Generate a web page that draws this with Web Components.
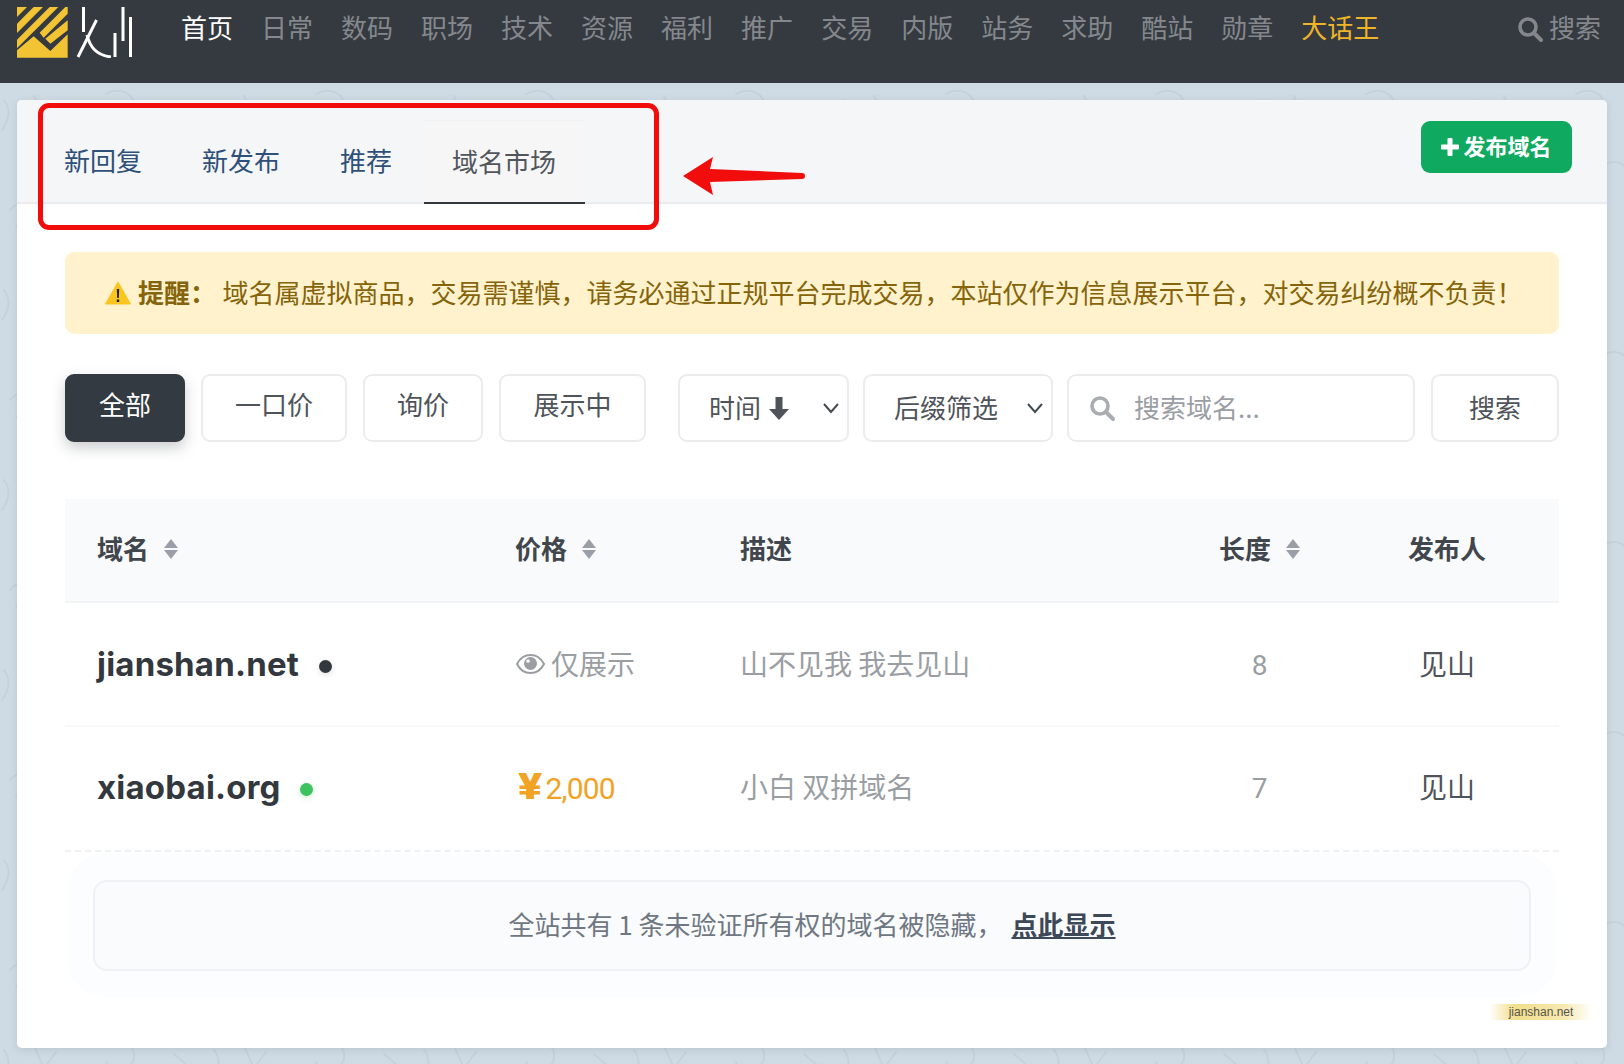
<!DOCTYPE html>
<html lang="zh"><head><meta charset="utf-8"><title>域名市场</title>
<style>
html,body{margin:0;padding:0}
body{width:1624px;height:1064px;overflow:hidden;background-color:#cfdbe4;font-family:"Noto Sans CJK SC","Noto Sans",sans-serif;font-size:26px;color:#33383f;position:relative}
</style></head><body>
<site-bg></site-bg>
<site-nav></site-nav>
<market-card>
  <tab-bar slot="head"></tab-bar>
  <warn-note></warn-note>
  <filter-bar></filter-bar>
  <domain-table></domain-table>
  <hidden-note></hidden-note>
</market-card>
<script>
function def(name, html){
  customElements.define(name, class extends HTMLElement{
    constructor(){super();this.attachShadow({mode:'open'}).innerHTML=html;}
  });
}
const SEARCH=c=>`<svg width="26" height="26" viewBox="0 0 26 26" fill="none" stroke="${c}"><circle cx="11" cy="11" r="8" stroke-width="3.6"/><path d="M17 17l7 7" stroke-width="4" stroke-linecap="round"/></svg>`;
const SORT=`<svg width="14" height="20" viewBox="0 0 14 20" fill="#9a9ea8"><path d="M7 0l7 9H0zM0 11h14l-7 9z"/></svg>`;
const CHEV=`<svg width="18" height="12" viewBox="0 0 18 12" fill="none" stroke="#444a52" stroke-width="2"><path d="M2 2l7 8 7-8"/></svg>`;

def('site-bg',`<style>:host{position:absolute;inset:0;z-index:0;display:block}svg{width:100%;height:100%;display:block}</style>
<svg><defs><pattern id="p" width="210" height="190" patternUnits="userSpaceOnUse"><g fill="none" stroke="#c5d2dc" stroke-width="2" stroke-linecap="round">
<path d="M10 20c10-12 28-8 30 6s-16 20-24 10"/><path d="M90 8c14 6 22 18 14 28M96 30l-10 8"/><circle cx="170" cy="24" r="15"/><circle cx="170" cy="24" r="7"/>
<path d="M4 100c8 10 4 22-2 30M34 96l10 22 12-16"/><path d="M106 94c14-8 30 0 28 14s-24 16-28 4"/><path d="M174 104l14 12-6 16M168 132c8 4 14 2 20-2"/><path d="M40 160c10-8 24-8 32 2M130 168c8-8 20-8 26 0"/></g></pattern></defs>
<rect width="100%" height="100%" fill="url(#p)"/></svg>`);

def('site-nav',`<style>
:host{display:flex;position:relative;z-index:1;height:83px;background:#353a40;box-sizing:border-box;padding:0 23px 0 17px;align-items:flex-start}
.logo{width:118px;height:58px;margin-top:0;flex:none;display:block}
ul{list-style:none;display:flex;margin:0 0 0 46px;padding:9px 0 0;gap:28px;flex:1}
li{line-height:36px;color:#84888d;white-space:nowrap}
li.on{color:#fff}li.gold{color:#f0b429}
.s{display:flex;align-items:center;gap:6px;color:#84888d;padding-top:9px;line-height:36px}
.s svg{margin-top:3px}
</style>
<svg class="logo" viewBox="0 0 118 58" fill="none">
<g transform="translate(0 7) scale(.3333)" fill="#f2c433">
<path d="M0 0h30L0 30z"/><path d="M50 0h28L0 78V50z"/><path d="M98 0h26L0 124V98z"/>
<path d="M145 0h7v20L80 92 68 77z"/><path d="M152 40v30l-52 40-15-15z"/>
<path d="M0 130l50-42 50 44 52-50v70H0z"/></g>
<g stroke="#fff" stroke-width="3"><path d="M66.500 7v25"/><path d="M79.500 20L61 57"/><path d="M70 35c3 12 9 20 24 22"/><path d="M98 33v24"/><path d="M106 7v34"/><path d="M113.500 17v40"/></g>
</svg>
<ul><li class="on">首页</li><li>日常</li><li>数码</li><li>职场</li><li>技术</li><li>资源</li><li>福利</li><li>推广</li><li>交易</li><li>内版</li><li>站务</li><li>求助</li><li>酷站</li><li>勋章</li><li class="gold">大话王</li></ul>
<div class="s">${SEARCH('#84888d')}<span>搜索</span></div>`);

def('market-card',`<style>
:host{display:block;position:absolute;z-index:1;left:17px;top:100px;width:1590px;height:948px;background:#fff;border-radius:5px;box-shadow:0 2px 8px rgba(90,110,130,.18);box-sizing:border-box}
.body{padding:48px 48px 0}
</style><slot name="head"></slot><div class="body"><slot></slot></div><jian-mark></jian-mark>`);

def('jian-mark',`<style>
:host{position:absolute;right:14px;bottom:28px;width:104px;height:16px;font:12px/16px "Liberation Sans",sans-serif;color:#57544a;text-align:center;background:linear-gradient(90deg,rgba(243,222,140,0),#f3de8c 25%,#f6e8ae 70%,rgba(243,222,140,0))}
</style>jianshan.net`);

def('tab-bar',`<style>
:host{display:flex;height:104px;box-sizing:border-box;background:#f5f6f7;border-bottom:2px solid #e9ebed;border-radius:5px 5px 0 0;position:relative;padding:20px 35px 0 17px;justify-content:space-between}
nav{display:flex;align-items:stretch;height:84px;gap:0}
a{padding:0 30px 4px;display:flex;align-items:center;color:#2f5078;line-height:1;box-sizing:border-box}
a.on{color:#52565c;background:#f6f6f7;border-bottom:2px solid #33383f;height:84px;padding:0 29px 2px 28px;margin-left:2px;border-top:1px solid #f1f2f3}
.pub{margin-top:1px;width:151px;height:52px;background:#0fa960;border-radius:9px;color:#fff;font-weight:700;font-size:22px;display:flex;align-items:center;justify-content:center;gap:4px;line-height:1;padding-bottom:4px;box-sizing:border-box}
.red{position:absolute;left:21px;top:3px;width:621px;height:127px;box-sizing:border-box;border:5px solid #f20d0d;border-radius:11px;pointer-events:none}
.arrow{position:absolute;left:666px;top:57px}
</style>
<nav><a>新回复</a><a>新发布</a><a>推荐</a><a class="on">域名市场</a></nav>
<div class="pub"><svg style="margin-top:3px" width="18" height="18" viewBox="0 0 18 18" fill="#fff"><path d="M6.500 1a1 1 0 011-1h3a1 1 0 011 1v5.500H17a1 1 0 011 1v3a1 1 0 01-1 1h-5.500V17a1 1 0 01-1 1h-3a1 1 0 01-1-1v-5.500H1a1 1 0 01-1-1v-3a1 1 0 011-1h5.500z"/></svg>发布域名</div>
<div class="red"></div>
<svg class="arrow" width="124" height="38" viewBox="0 0 124 38" fill="#f20d0d"><path d="M0 19L30 0l-3 12 92 4a3 3 0 010 6l-92 3 3 13z"/></svg>`);

def('warn-note',`<style>
:host{display:flex;align-items:center;height:82px;box-sizing:border-box;background:#fff2cc;border-radius:9px;color:#85640b;padding:0 0 4px 40px;white-space:nowrap}
svg{flex:none;margin-right:7px;margin-top:4px}b{margin-right:6.500px}
</style><svg width="26" height="24" viewBox="0 0 26 24"><path d="M13 1L25.500 23H.5z" fill="#f9c51f" stroke="#f9c51f" stroke-linejoin="round"/><path d="M11.800 8h2.400l-.4 9h-1.600zM11.800 18.500h2.400v2.400h-2.400z" fill="#222"/></svg><b>提醒：</b><span>域名属虚拟商品，交易需谨慎，请务必通过正规平台完成交易，本站仅作为信息展示平台，对交易纠纷概不负责！</span>`);

def('filter-bar',`<style>
:host{display:flex;margin-top:40px;height:68px;align-items:stretch}
.b{box-sizing:border-box;display:flex;align-items:center;justify-content:center;border:2px solid #eaecee;border-radius:9px;background:#fff;color:#4f545a;padding-bottom:9px}
.all{width:120px;background:#343a41;border-color:#343a41;color:#fff;box-shadow:0 6px 14px rgba(52,58,65,.25)}
.sel{justify-content:flex-start;position:relative;padding-bottom:4px}
.sel svg.c{position:absolute;right:7px;top:26px}
.inp{width:348px;margin-left:14px;justify-content:flex-start;padding:0 0 0 20px;color:#9a9ea3;gap:19px}
.inp span{padding-bottom:4px}
</style>
<div class="b all">全部</div>
<div class="b" style="width:146px;margin-left:16px">一口价</div>
<div class="b" style="width:120px;margin-left:16px">询价</div>
<div class="b" style="width:147px;margin-left:16px">展示中</div>
<div class="b sel" style="width:171px;margin-left:32px;padding-left:29px">时间<svg style="margin:4px 0 0 7px" width="22" height="25" viewBox="0 0 22 25" fill="#4f545a"><path d="M7.500 1h7v12H21L11 24 1 13h6.500z"/></svg><svg class="c" width="18" height="12" viewBox="0 0 18 12" fill="none" stroke="#444a52" stroke-width="2"><path d="M2 2l7 8 7-8"/></svg></div>
<div class="b sel" style="width:190px;margin-left:14px;padding-left:29px">后缀筛选${CHEV.replace('<svg','<svg class="c"')}</div>
<div class="b inp">${SEARCH('#a9adb2')}<span>搜索域名...</span></div>
<div class="b" style="width:128px;margin-left:16px;padding-bottom:4px">搜索</div>`);

const ROW=`display:grid;grid-template-columns:419px 224px 476px 151px 224px;align-items:center;`;
def('domain-table',`<style>
:host{display:block;margin-top:57px}
.h,.r{${ROW}}
.h{height:104px;background:#f9fafb;border-bottom:2px solid #f2f3f5;box-sizing:border-box;font-weight:700;color:#41464d;font-size:26px}
.r{height:124px;box-sizing:border-box;border-bottom:2px solid #f7f8f9;font-size:28px}
.r.l{height:125px;border-bottom:2px dashed #eef0f2}
.c1,.c2,.c3{padding-left:32px}
.c4,.c5{text-align:center}
.t{padding-bottom:6px}
.h .c2{padding-left:31px}
.th{display:flex;align-items:center;gap:15px}.th.ct{justify-content:center}
.th svg{margin-bottom:2px}
.name{font:700 33px/1 Inter,"Noto Sans",sans-serif;color:#33383f;display:flex;align-items:center;letter-spacing:.2px}
.l .name{padding-bottom:2px}
.dot{width:13px;height:13px;border-radius:50%;background:#33383f;margin-left:20px;margin-top:4px;box-shadow:0 2px 6px rgba(0,0,0,.12)}
.dot.g{margin-left:19px;background:#3cc25e;box-shadow:0 2px 6px rgba(60,194,94,.25)}
.ro{color:#9a9ea3;display:flex;align-items:center;gap:6px;padding-bottom:2px}
.ro svg{margin-top:2px}
.price{color:#f1a325;font:400 30px/1 Roboto,sans-serif;display:flex;align-items:baseline;gap:8px;letter-spacing:-.8px;margin-left:2px;padding-bottom:4px}
.price b{font-size:36px;font-weight:900;letter-spacing:0;display:inline-block;transform:scaleX(1.25);transform-origin:0 50%}
.d,.u{padding-bottom:2px}.l .d,.l .u{padding-bottom:6px}
.d{color:#9a9ea3}.n{color:#9a9ea3;font:28px Roboto,sans-serif;padding-top:2px}.l .n{padding-top:0}.u{color:#4f545a}
</style>
<div class="h"><div class="c1 th"><span class="t">域名</span> ${SORT}</div><div class="c2 th"><span class="t">价格</span> ${SORT}</div><div class="c3 t">描述</div><div class="c4 th ct"><span class="t">长度</span> ${SORT}</div><div class="c5 t">发布人</div></div>
<div class="r"><div class="c1 name">jianshan.net<i class="dot"></i></div><div class="c2 ro"><svg width="29" height="20" viewBox="0 0 29 20"><path d="M14.500 1C8 1 3.500 5 1 10c2.500 5 7 9 13.500 9S25.500 15 28 10C25.500 5 21 1 14.500 1z" fill="none" stroke="#9a9ea3" stroke-width="2"/><circle cx="14.500" cy="9.500" r="6.500" fill="#9a9ea3"/><circle cx="12" cy="7" r="1.800" fill="#fff"/></svg>仅展示</div><div class="c3 d">山不见我 我去见山</div><div class="c4 n">8</div><div class="c5 u">见山</div></div>
<div class="r l"><div class="c1 name">xiaobai.org<i class="dot g"></i></div><div class="c2 price"><b>¥</b>2,000</div><div class="c3 d">小白 双拼域名</div><div class="c4 n">7</div><div class="c5 u">见山</div></div>`);

def('hidden-note',`<style>
:host{display:flex;align-items:center;justify-content:center;box-sizing:border-box;margin:28px 28px 0;height:91px;padding-bottom:4px;background:#f9fbfc;border:2px solid #eff1f4;border-radius:14px;color:#6f7782;white-space:nowrap;box-shadow:0 0 0 26px #fcfdfe}
a{color:#3d4858;font-weight:700;text-decoration:underline;margin-left:9px}
</style>全站共有 1 条未验证所有权的域名被隐藏，<a>点此显示</a>`);
</script>
</body></html>
